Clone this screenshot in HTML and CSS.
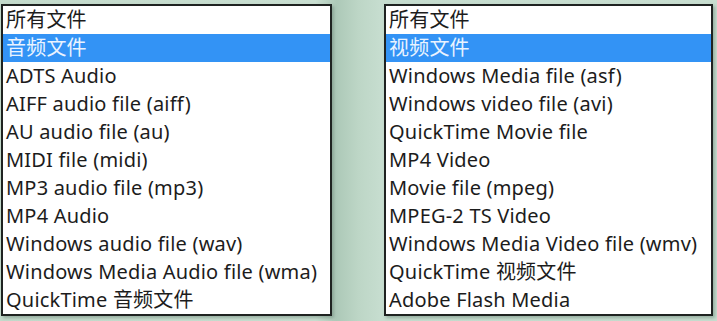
FILE: index.html
```html
<!DOCTYPE html>
<html lang="zh-CN">
<head>
    <meta charset="UTF-8">
    <title>文件类型</title>
    <link rel="stylesheet" href="styles.css">
</head>
<body>
    <div class="lists">
        <ul class="list">
            <li>所有文件</li>
            <li class="selected">音频文件</li>
            <li>ADTS Audio</li>
            <li>AIFF audio file (aiff)</li>
            <li>AU audio file (au)</li>
            <li>MIDI file (midi)</li>
            <li>MP3 audio file (mp3)</li>
            <li>MP4 Audio</li>
            <li>Windows audio file (wav)</li>
            <li>Windows Media Audio file (wma)</li>
            <li>QuickTime 音频文件</li>
        </ul>
        <ul class="list list-right">
            <li>所有文件</li>
            <li class="selected">视频文件</li>
            <li>Windows Media file (asf)</li>
            <li>Windows video file (avi)</li>
            <li>QuickTime Movie file</li>
            <li>MP4 Video</li>
            <li>Movie file (mpeg)</li>
            <li>MPEG-2 TS Video</li>
            <li>Windows Media Video file (wmv)</li>
            <li>QuickTime 视频文件</li>
            <li>Adobe Flash Media</li>
        </ul>
    </div>
</body>
</html>
```

FILE: styles.css
```css
body {
    margin: 0;
    height: 321px;
    overflow: hidden;
    background: linear-gradient(90deg, #c4dbcc 0%, #c9dfd1 44%, #adc9b8 47%, #bdd6c6 50%, #c6ddcf 53%, #c8ded0 100%);
    font-family: "Noto Sans", "Noto Sans CJK SC", sans-serif;
}

.lists {
    display: flex;
    gap: 52px;
    padding: 4px 0 0 1px;
}

.list {
    list-style: none;
    margin: 0;
    padding: 0;
    width: 327px;
    height: 308px;
    background: #fff;
    border: 2px solid #1f2321;
    box-shadow: 2px 2px 3px rgba(60, 90, 75, 0.35);
}

.list-right {
    width: 325px;
}

.list li {
    height: 28px;
    line-height: 28px;
    padding-left: 3px;
    font-size: 20px;
    letter-spacing: 0.2px;
    color: #1c1c1c;
    white-space: nowrap;
}

.list li.selected {
    background: #3393f5;
    color: #eaf3ff;
}
```
